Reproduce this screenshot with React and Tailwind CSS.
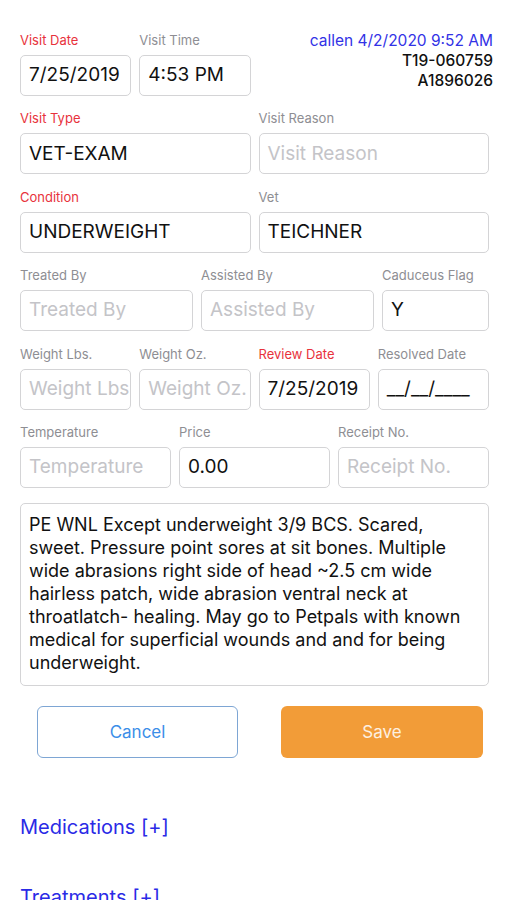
import React from "react";

const font = { fontFamily: "Inter, 'Noto Sans', sans-serif" };

function Label({ children, req }) {
  return (
    <div className={`h-4 text-[13px] leading-4 whitespace-nowrap ${req ? "text-[#e8323c]" : "text-[#8e8e93]"}`}>
      {children}
    </div>
  );
}

function Box({ value, placeholder }) {
  return (
    <div className="mt-[7px] h-[41px] rounded-[5px] border border-[#d4d4d6] bg-white px-2 flex items-center overflow-hidden">
      <span className={`text-[19px] whitespace-nowrap ${value ? "text-[#111]" : "text-[#c4c4c8]"}`}>
        {value || placeholder}
      </span>
    </div>
  );
}

function Field({ label, req, value, placeholder }) {
  return (
    <div className="min-w-0">
      <Label req={req}>{label}</Label>
      <Box value={value} placeholder={placeholder} />
    </div>
  );
}

export default function App() {
  return (
    <div className="w-[507px] h-[900px] overflow-hidden bg-white" style={font}>
      <div className="pt-[32px] pl-[20px] pr-[18px] flex flex-col gap-[14.4px]">
        <div className="grid grid-cols-4 gap-x-2">
          <Field label="Visit Date" req value="7/25/2019" />
          <Field label="Visit Time" value="4:53 PM" />
          <div className="col-span-2 flex flex-col items-end text-[15.5px] leading-5 -mr-[4px] -mt-[1px]">
            <div className="text-[#3232e6] whitespace-nowrap">callen 4/2/2020 9:52 AM</div>
            <div className="text-[#111] font-medium">T19-060759</div>
            <div className="text-[#111] font-medium">A1896026</div>
          </div>
        </div>
        <div className="grid grid-cols-2 gap-x-2">
          <Field label="Visit Type" req value="VET-EXAM" />
          <Field label="Visit Reason" placeholder="Visit Reason" />
        </div>
        <div className="grid grid-cols-2 gap-x-2">
          <Field label="Condition" req value="UNDERWEIGHT" />
          <Field label="Vet" value="TEICHNER" />
        </div>
        <div className="grid grid-cols-[173px_173px_1fr] gap-x-2">
          <Field label="Treated By" placeholder="Treated By" />
          <Field label="Assisted By" placeholder="Assisted By" />
          <Field label="Caduceus Flag" value="Y" />
        </div>
        <div className="grid grid-cols-4 gap-x-2">
          <Field label="Weight Lbs." placeholder="Weight Lbs." />
          <Field label="Weight Oz." placeholder="Weight Oz." />
          <Field label="Review Date" req value="7/25/2019" />
          <Field label="Resolved Date" value="__/__/____" />
        </div>
        <div className="grid grid-cols-3 gap-x-2">
          <Field label="Temperature" placeholder="Temperature" />
          <Field label="Price" value="0.00" />
          <Field label="Receipt No." placeholder="Receipt No." />
        </div>
      </div>
      <div className="ml-[20px] mr-[18px] mt-[15px] h-[183px] rounded-[5px] border border-[#d4d4d6] px-2 pt-[9px] text-[18px] leading-[23px] text-[#111]">
        PE WNL Except underweight 3/9 BCS. Scared, sweet. Pressure point sores at sit bones. Multiple wide abrasions right side of head ~2.5 cm wide hairless patch, wide abrasion ventral neck at throatlatch- healing. May go to Petpals with known medical for superficial wounds and and for being underweight.
      </div>
      <div className="mt-[20px] flex gap-[43px] pl-[37px]">
        <button className="w-[201px] h-[52px] rounded-[6px] border border-[#7ea6d4] bg-white text-[17px] text-[#3b8ee8] pt-[2px]">
          Cancel
        </button>
        <button className="w-[202px] h-[52px] rounded-[6px] bg-[#f29c38] text-[17px] text-[#fdf0e0] pt-[2px]">
          Save
        </button>
      </div>
      <div className="pl-[20px] mt-[56px] text-[20px] leading-[26px] text-[#2a2ae6]">Medications [+]</div>
      <div className="pl-[20px] mt-[44px] text-[20px] leading-[26px] text-[#2a2ae6]">Treatments [+]</div>
    </div>
  );
}
